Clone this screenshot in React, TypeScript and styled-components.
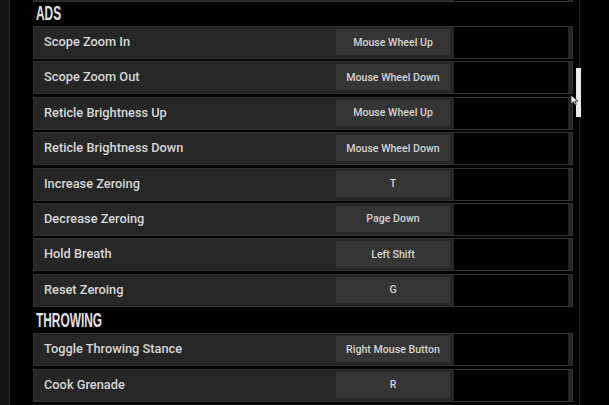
import React from 'react'
import styled, { createGlobalStyle } from 'styled-components'

const GlobalStyle = createGlobalStyle`
    html, body {
        margin: 0;
        padding: 0;
        background: #000;
        overflow: hidden;
    }
`

const Screen = styled.div`
    position: relative;
    width: 609px;
    height: 405px;
    overflow: hidden;
    display: flex;
    background: #000;
`

const Gutter = styled.div`
    flex: none;
    width: 9px;
    background: #131313;
    border-right: 1px solid #262626;
`

const List = styled.div`
    flex: none;
    width: 540px;
    margin-left: 23px;
    display: flex;
    flex-direction: column;
`

const Header = styled.div`
    flex: none;
    height: 24px;
    padding-left: 3px;
    box-sizing: border-box;
    font-family: "Liberation Sans", sans-serif;
    font-weight: 700;
    font-size: 20.5px;
    line-height: 21px;
    color: #e2e2e2;
    span {
        display: inline-block;
        transform: scaleX(0.58);
        transform-origin: left center;
    }
`

const Row = styled.div<{ $ghost?: boolean }>`
    flex: none;
    height: 33px;
    box-sizing: border-box;
    display: flex;
    align-items: center;
    border: 1px solid #323232;
    background: #262626;
    margin-top: ${p => (p.$ghost ? '-31px' : '0')};
    margin-bottom: ${p => (p.$ghost ? '0' : '2.4px')};
`

const Label = styled.div`
    flex: none;
    width: 302px;
    box-sizing: border-box;
    padding-left: 10px;
    padding-bottom: 2px;
    font-family: Roboto, "Noto Sans", sans-serif;
    font-weight: 500;
    font-size: 12.8px;
    color: #d8d8d8;
    white-space: nowrap;
`

const KeyCell = styled.div`
    flex: none;
    align-self: flex-start;
    margin-top: 2px;
    width: 114px;
    height: 26px;
    background: #353535;
    display: flex;
    align-items: center;
    justify-content: center;
    font-family: Roboto, "Noto Sans", sans-serif;
    font-weight: 500;
    font-size: 10.6px;
    color: #d4d4d4;
    white-space: nowrap;
`

const BindSlot = styled.div`
    flex: none;
    align-self: stretch;
    width: 114px;
    margin-left: 4px;
    background: #000;
`

const Scrollbar = styled.div`
    flex: none;
    position: relative;
    width: 5px;
    margin-left: 3px;
    &::before {
        content: '';
        position: absolute;
        left: 3px;
        top: 0;
        bottom: 0;
        width: 1px;
        background: #1c1c1c;
    }
`

const Thumb = styled.div`
    position: relative;
    margin-top: 68px;
    width: 5px;
    height: 49px;
    background: #ececec;
`

const Cursor = styled.svg`
    position: absolute;
    left: 570px;
    top: 94px;
`

type Binding = { label: string, key: string }

const sections: { title: string, items: Binding[] }[] = [
    {
        title: 'ADS',
        items: [
            { label: 'Scope Zoom In', key: 'Mouse Wheel Up' },
            { label: 'Scope Zoom Out', key: 'Mouse Wheel Down' },
            { label: 'Reticle Brightness Up', key: 'Mouse Wheel Up' },
            { label: 'Reticle Brightness Down', key: 'Mouse Wheel Down' },
            { label: 'Increase Zeroing', key: 'T' },
            { label: 'Decrease Zeroing', key: 'Page Down' },
            { label: 'Hold Breath', key: 'Left Shift' },
            { label: 'Reset Zeroing', key: 'G' },
        ],
    },
    {
        title: 'THROWING',
        items: [
            { label: 'Toggle Throwing Stance', key: 'Right Mouse Button' },
            { label: 'Cook Grenade', key: 'R' },
        ],
    },
]

const App: React.FC = () => (
    <>
        <GlobalStyle />
        <Screen>
            <Gutter />
            <List>
                <Row $ghost>
                    <Label />
                    <KeyCell />
                    <BindSlot />
                </Row>
                {sections.map(section => (
                    <React.Fragment key={section.title}>
                        <Header><span>{section.title}</span></Header>
                        {section.items.map(item => (
                            <Row key={item.label}>
                                <Label>{item.label}</Label>
                                <KeyCell>{item.key}</KeyCell>
                                <BindSlot />
                            </Row>
                        ))}
                    </React.Fragment>
                ))}
            </List>
            <Scrollbar>
                <Thumb />
            </Scrollbar>
            <Cursor width="9" height="12" viewBox="0 0 9 12">
                <path d="M1 1 L1 10 L3.4 7.8 L5 11 L6.4 10.3 L4.9 7.2 L8 7.2 Z" fill="#f2f2f2" stroke="#222" strokeWidth="0.8" />
            </Cursor>
        </Screen>
    </>
)

export default App
